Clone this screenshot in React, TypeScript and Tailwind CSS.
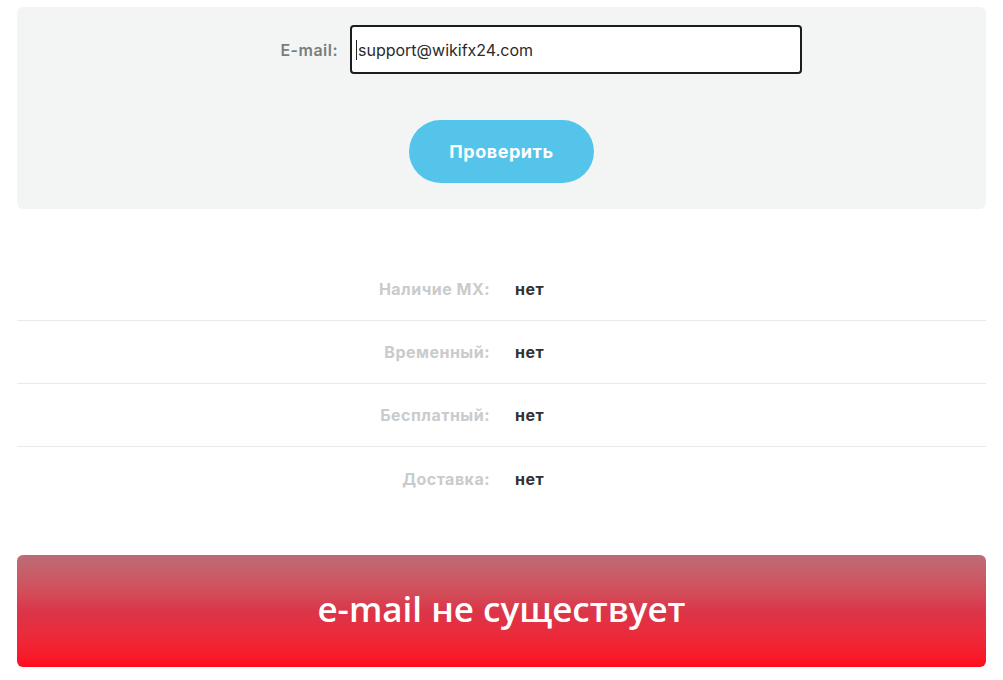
import { useState } from "react";

// строки результата проверки адреса
const checks = [
  { label: "Наличие MX:", value: "нет" },
  { label: "Временный:", value: "нет" },
  { label: "Бесплатный:", value: "нет" },
  { label: "Доставка:", value: "нет" },
];

export default function App() {
  const [email, setEmail] = useState("support@wikifx24.com");

  return (
    <div className="min-h-screen bg-white px-[17px] pt-[7px] font-['Inter','Open_Sans',sans-serif]">
      {/* форма проверки */}
      <div className="h-[202px] rounded-md bg-[#f3f5f5] pt-[18px]">
        <div className="flex items-center">
          <label className="w-[321px] text-right text-[16px] font-semibold tracking-[0.03em] text-[#7a7d7e]">
            E-mail:
          </label>
          <div className="ml-3 flex h-[49px] w-[452px] items-center rounded-[4px] border-2 border-[#1c1c1c] bg-white pl-[4px]">
            <span className="h-[20px] w-px bg-[#222]" />
            <input
              value={email}
              onChange={(e) => setEmail(e.target.value)}
              className="w-full bg-transparent pl-px text-[16px] text-[#2a2a2a] outline-none"
            />
          </div>
        </div>
        <div className="mt-[46px] flex justify-center">
          <button className="h-[63px] w-[185px] rounded-full bg-[#55c4eb] pb-px text-[18px] font-bold tracking-[0.03em] text-white">
            Проверить
          </button>
        </div>
      </div>

      {/* таблица результатов */}
      <div className="mt-[49px]">
        {checks.map((c, i) => (
          <div
            key={c.label}
            className={`flex h-[63px] items-center ${i < checks.length - 1 ? "border-b border-[#e8e9e9]" : ""}`}
          >
            <div className="w-[473px] text-right text-[16px] font-bold tracking-[0.03em] text-[#c9cbcc]">{c.label}</div>
            <div className="ml-[25px] text-[16px] font-bold tracking-[0.03em] text-[#2f3133]">{c.value}</div>
          </div>
        ))}
      </div>

      {/* итог */}
      <div className="mt-[45px] flex h-[112px] items-center justify-center rounded-md bg-gradient-to-b from-[#bd6c77] via-[#db3549] to-[#ff0a1c] pb-1">
        <span className="font-['Open_Sans',sans-serif] text-[35px] font-semibold text-white">e-mail не существует</span>
      </div>
    </div>
  );
}
